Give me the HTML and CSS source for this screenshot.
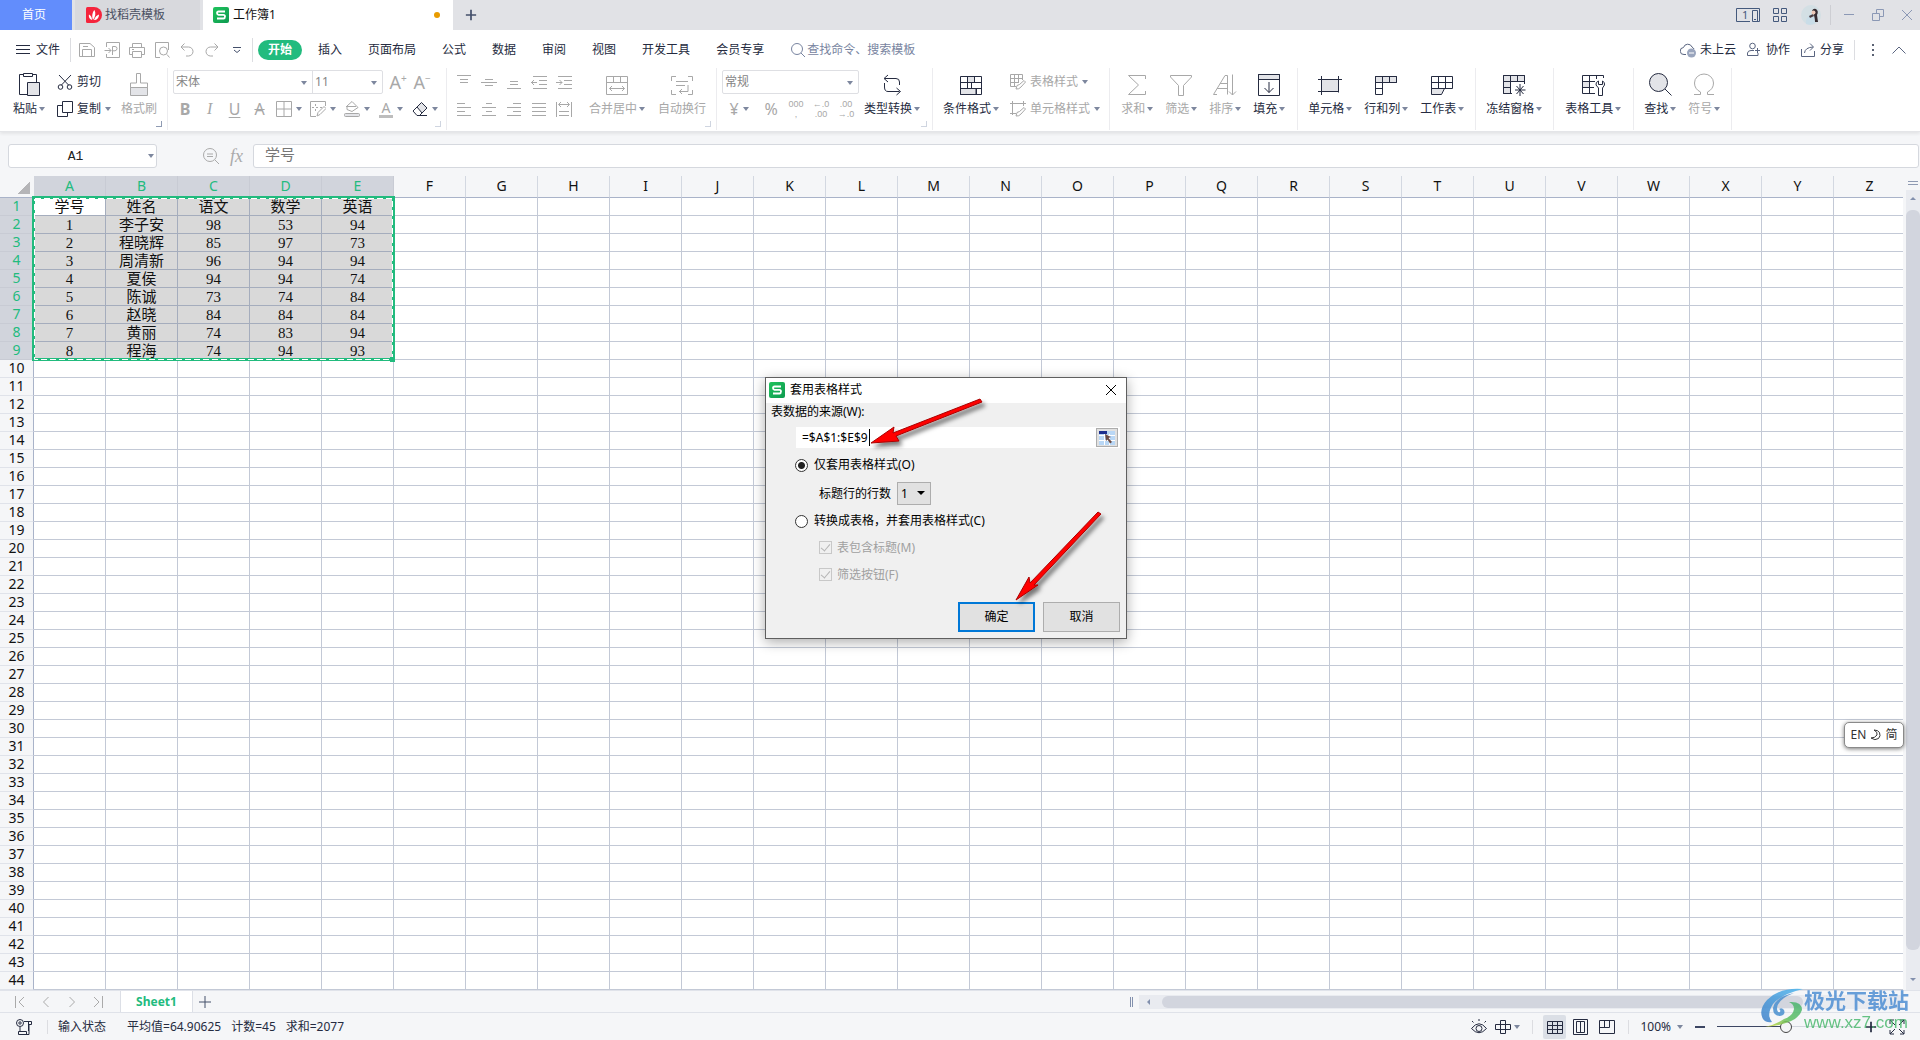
FILE: index.html
```html
<!DOCTYPE html>
<html lang="zh-CN">
<head>
<meta charset="utf-8">
<title>工作簿1</title>
<link rel="stylesheet" href="styles.css">
</head>
<body>
<svg class="sprite" aria-hidden="true">
  <defs>
    <linearGradient id="g-green" x1="0" y1="0" x2="1" y2="1"><stop offset="0" stop-color="#1fc35c"/><stop offset="1" stop-color="#0e9a50"/></linearGradient>
    <linearGradient id="g-blue" x1="0" y1="1" x2="1" y2="0"><stop offset="0" stop-color="#3f7fc8"/><stop offset="1" stop-color="#4db8f0"/></linearGradient>
    <linearGradient id="g-leaf" x1="0" y1="1" x2="1" y2="0"><stop offset="0" stop-color="#d9dc3c"/><stop offset=".5" stop-color="#5cbf62"/><stop offset="1" stop-color="#48b373"/></linearGradient>
    <filter id="f-shadow" x="-20%" y="-20%" width="150%" height="150%"><feDropShadow dx="3" dy="4" stdDeviation="2" flood-color="#000" flood-opacity=".5"/></filter>
  </defs>
  <symbol id="i-wps" viewBox="0 0 16 16"><rect width="16" height="16" rx="2" fill="url(#g-green)"/><path d="M12 4.500H5.500Q4 4.500 4 6T5.500 7.800H10.500Q12 7.800 12 9.600T10.500 11.500H4" fill="none" stroke="#fff" stroke-width="1.800"/></symbol>
  <symbol id="i-docer" viewBox="0 0 16 16"><path d="M0 1.500Q0 0 1.500 0H8A8 8 0 0 1 8 16H1.500Q0 16 0 14.500Z" fill="#f5243c"/><path d="M7 13C5.500 9 6.500 5 8.500 3C10 6 9.500 10 7 13ZM6 13C3 12 2.500 9 3 7.500C5 8.500 6 10.500 6 13ZM8 13C9 10 11 8 13 7.500C13 11 11 13 8 13Z" fill="#fff"/></symbol>
  <symbol id="i-plus" viewBox="0 0 14 14"><path d="M1 7H13M7 1V13"/></symbol>
  <symbol id="i-menu" viewBox="0 0 14 12"><path d="M0 1.500H14M0 5.500H14M0 9.500H14"/></symbol>
  <symbol id="i-save" viewBox="0 0 16 16"><path d="M.5 1.500H11L15.500 5.500V14.500H.5ZM3.500 14V7.500H12.500V14M4 4.500H9"/></symbol>
  <symbol id="i-pdf" viewBox="0 0 16 16"><path d="M2.500 5V.5H15.500V15.500H2.500V12M.5 8.500H7M4.500 6L7 8.500L4.500 11M8.500 13V4.500H11Q13 4.500 13 6.500T11 8.800H9"/></symbol>
  <symbol id="i-print" viewBox="0 0 16 16"><path d="M3.500 5V1.500H12.500V5M3.500 12.500H.5V5.500H15.500V12.500H12.500M3.500 9.500H12.500V15.500H3.500ZM3 7.500H5"/></symbol>
  <symbol id="i-preview" viewBox="0 0 16 16"><path d="M6 15.500H1.500V.5H14.500V8M13 12.500L15.500 15.500"/><circle cx="9.500" cy="9" r="4"/></symbol>
  <symbol id="i-undo" viewBox="0 0 16 16"><path d="M5.500 1.500L2 5L5.500 8.500M2 5H9.500A4.500 4.500 0 0 1 9.500 14H7"/></symbol>
  <symbol id="i-redo" viewBox="0 0 16 16"><path d="M10.500 1.500L14 5L10.500 8.500M14 5H6.500A4.500 4.500 0 0 0 6.500 14H9"/></symbol>
  <symbol id="i-more" viewBox="0 0 10 8"><path d="M1 1.500H9M2 4L5 6.500L8 4"/></symbol>
  <symbol id="i-search" viewBox="0 0 16 16"><circle cx="7" cy="7" r="5.500"/><path d="M11 11L15 15"/></symbol>
  <symbol id="i-cloud" viewBox="0 0 16 16"><path d="M6 12.500H4A3.500 3.500 0 0 1 3.500 5.500A4.500 4.500 0 0 1 12 5Q13.500 6 14 7"/><circle cx="11.500" cy="11" r="4.500" fill="#9aa5bd" stroke="none"/><path d="M9 11H14" stroke="#fff"/></symbol>
  <symbol id="i-collab" viewBox="0 0 16 16"><circle cx="6.500" cy="4" r="2.800"/><path d="M1.500 13.500V11Q2 8.500 5 8.500H8M1.500 13.500H12V11M9 8.500H14M11.500 6V11"/></symbol>
  <symbol id="i-share" viewBox="0 0 16 16"><path d="M1.500 7V14.500H14.500V9M4.500 11Q5 5.500 13 5M10 1.500L13.500 5L10 8.500"/></symbol>
  <symbol id="i-dots" viewBox="0 0 4 14"><path d="M1 1H3V3H1ZM1 6H3V8H1ZM1 11H3V13H1Z" fill="#5a6273" stroke="none"/></symbol>
  <symbol id="i-up" viewBox="0 0 14 8"><path d="M.5 7.500L7 1L13.500 7.500"/></symbol>
  <symbol id="i-screens" viewBox="0 0 26 16"><path d="M15 14.500H1.500V1.500H24.500V14.500H20M17.500 3.500H22.500V14.500H17.500ZM19 12.500H21"/></symbol>
  <symbol id="i-apps" viewBox="0 0 14 14"><path d="M.5.5H5.500V5.500H.5ZM8.500.5H13.500V5.500H8.500ZM.5 8.500H5.500V13.500H.5ZM8.500 8.500H13.500V13.500H8.500Z"/></symbol>
  <symbol id="i-min" viewBox="0 0 12 12"><path d="M1 5.500H11"/></symbol>
  <symbol id="i-restore" viewBox="0 0 12 12"><path d="M.5 4.500H7.500V11.500H.5ZM4.500 4V.5H11.500V7.500H8"/></symbol>
  <symbol id="i-close" viewBox="0 0 12 12"><path d="M1 1L11 11M11 1L1 11"/></symbol>
  <symbol id="i-paste" viewBox="0 0 24 24"><path d="M10 22.500H2.500V2.500H6.500M15.500 2.500H19.500V10M6.500 1.500H15.500V4.500H6.500Z"/><path d="M10.500 10.500H22.500V23.500H10.500Z" class="shade"/></symbol>
  <symbol id="i-cut" viewBox="0 0 16 16"><path d="M2 1L12 11.500M14 1L4 11.500"/><circle cx="3.500" cy="13" r="2.300"/><circle cx="12.500" cy="13" r="2.300"/></symbol>
  <symbol id="i-copy" viewBox="0 0 16 16"><path d="M5.500.5H15.500V11.500H5.500ZM5 4.500H.5V15.500H10.500V12"/></symbol>
  <symbol id="i-brush" viewBox="0 0 24 24"><path d="M9.500 11V1.500H13.500V11H20.500V16H3.500V11Z"/><path d="M3.500 15.500H20.500V23.500H3.500Z" class="shade"/></symbol>
  <symbol id="i-border" viewBox="0 0 16 16"><path d="M.5.5H15.500V15.500H.5ZM8 .5V15.500M.5 8H15.500"/></symbol>
  <symbol id="i-pattern" viewBox="0 0 16 16"><path d="M15.500 5V.5H.5V15.500H6M2 6.500H4M6 6.500H8M5.500 3V5M5.500 8V10M10 6.500H12M7 15L8 11.500L14 5.500L16 7.500L10 13.500Z"/></symbol>
  <symbol id="i-fill" viewBox="0 0 16 16"><path d="M3 5L8 .5L14 6.500L8 10.500L3 8.500ZM2 5.500H12"/><rect x=".5" y="12.500" width="15" height="3" class="shade" rx="1"/></symbol>
  <symbol id="i-eraser" viewBox="0 0 16 16"><path d="M5 6L9.500 1.500L15 7L10 12Z" class="shade"/><path d="M5 6L1 10L5 14.500H7.500L10 12M5 14.500H15"/></symbol>
  <symbol id="i-top" viewBox="0 0 16 16"><path d="M1 1.500H15M4 5.500H12M4 8.500H12"/></symbol>
  <symbol id="i-mid" viewBox="0 0 16 16"><path d="M4 5.500H12M0 8.500H16M4 11.500H12"/></symbol>
  <symbol id="i-bot" viewBox="0 0 16 16"><path d="M4 7.500H12M4 10.500H12M1 14.500H15"/></symbol>
  <symbol id="i-outdent" viewBox="0 0 16 16"><path d="M2 2.500H16M8 6.500H16M8 10.500H16M2 14.500H16M0 8.500H6M3 6L.5 8.500L3 11"/></symbol>
  <symbol id="i-indent" viewBox="0 0 16 16"><path d="M2 2.500H16M8 6.500H16M8 10.500H16M2 14.500H16M0 8.500H6M3.500 6L6 8.500L3.500 11"/></symbol>
  <symbol id="i-left" viewBox="0 0 16 16"><path d="M1 2.500H9M1 6.500H15M1 10.500H9M1 14.500H15"/></symbol>
  <symbol id="i-center" viewBox="0 0 16 16"><path d="M5 2.500H11M1 6.500H15M5 10.500H11M1 14.500H15"/></symbol>
  <symbol id="i-right" viewBox="0 0 16 16"><path d="M7 2.500H15M1 6.500H15M7 10.500H15M1 14.500H15"/></symbol>
  <symbol id="i-justify" viewBox="0 0 16 16"><path d="M1 2.500H15M1 6.500H15M1 10.500H15M1 14.500H15"/></symbol>
  <symbol id="i-spread" viewBox="0 0 16 16"><path d="M.5 1V16M15.500 1V16M3 3.500H13M5 1L2.500 3.500L5 6M11 1L13.500 3.500L11 6M3 10.500H13M3 14.500H13"/></symbol>
  <symbol id="i-merge" viewBox="0 0 24 24"><path d="M1.500 4.500H22.500V22.500H1.500ZM1.500 10.500H22.500M8.500 4.500V10.500M15.500 4.500V10.500M4.500 16.500H19.500M7 14L4.500 16.500L7 19M17 14L19.500 16.500L17 19"/></symbol>
  <symbol id="i-wrap" viewBox="0 0 24 24"><path d="M6 4.500H1.500V9M18 4.500H22.500V9M1.500 18V22.500H6M22.500 18V22.500H18M6 9.500H18M6 13.500H15M18 13V19.500H9M12 17L9.500 19.500L12 22"/></symbol>
  <symbol id="i-convert" viewBox="0 0 24 24"><path d="M4.500 6.500H16Q19.500 6.500 19.500 10V13M8 3L4 6.500L8 10M4.500 11V15Q4.500 19.500 8 19.500H19.500M16.500 16L20.500 19.500L16.500 23"/></symbol>
  <symbol id="i-cond" viewBox="0 0 24 24"><path d="M8.500 4.500H15.500V10.500H8.500ZM1.500 16.500H17V22.500H1.500Z" class="shade"/><path d="M1.500 4.500H22.500V22.500H1.500ZM1.500 10.500H22.500M1.500 16.500H22.500M8.500 4.500V16.500M15.500 4.500V10.500M12.500 10.500V16.500M17.500 16.500V22.500"/></symbol>
  <symbol id="i-tstyle" viewBox="0 0 16 16"><path d="M6 12.500H.5V.5H12.500V6M.5 4.500H12M.5 8.500H9M4.500.5V12M8.500.5V9M6 15L7 11.500L9.500 10.500L14 6.500L15.500 8L11 13Q9 15.500 6 15Z"/></symbol>
  <symbol id="i-cstyle" viewBox="0 0 16 16"><path d="M0 2.500H16M2.500 0V14M13.500 0V5M0 12.500H6M6 15L7 11.500L9.500 10.500L14 6.500L15.500 8L11 13Q9 15.500 6 15Z"/></symbol>
  <symbol id="i-sum" viewBox="0 0 24 24"><path d="M20.500 7V3.500H3.500L13.500 13L3.500 22.500H20.500V19"/></symbol>
  <symbol id="i-filter" viewBox="0 0 24 24"><path d="M1.500 3.500H22.500V5L14.500 13.500V23.500H9.500V13.500L1.500 5Z"/></symbol>
  <symbol id="i-sort" viewBox="0 0 24 24"><path d="M.5 22.500L12 3.500H14.500V22.500M4 16.500H14M7 11.500H14M.5 22.500H4M19.500 2.500V23M16 19.500L19.500 23L23 19.500"/></symbol>
  <symbol id="i-down" viewBox="0 0 24 24"><path d="M1.500 2.500H22.500V7.500H1.500Z" class="shade"/><path d="M1.500 2.500H22.500V23.500H1.500ZM12 10V20.500M7.500 16L12 20.500L16.500 16"/></symbol>
  <symbol id="i-cell" viewBox="0 0 24 24"><path d="M3.500 7.500H20.500V19.500H3.500Z" class="shade"/><path d="M0 7.500H24M0 19.500H18M3.500 4V23M20.500 4V17M20.500 18.500V20.500" /></symbol>
  <symbol id="i-rowcol" viewBox="0 0 24 24"><path d="M1.500 4.500H22.500V10.500H1.500Z" class="shade"/><path d="M1.500 4.500H22.500V10.500H8.500V22.500H1.500ZM8.500 4.500V10.500H1.500M15.500 4.500V10.500M1.500 16.500H8.500"/></symbol>
  <symbol id="i-sheet" viewBox="0 0 24 24"><path d="M1.500 16.500H14.500L11.500 22.500H1.500Z" class="shade"/><path d="M1.500 4.500H22.500V16.500H1.500ZM1.500 10.500H22.500M8.500 4.500V16.500M15.500 4.500V16.500"/></symbol>
  <symbol id="i-freeze" viewBox="0 0 24 24"><path d="M1.500 3.500H22.500V9.500H8.500V21.500H1.500Z" class="shade"/><path d="M22.500 12V3.500H1.500V21.500H10M1.500 9.500H22.500M8.500 3.500V21.500M15.500 3.500V9.500M1.500 15.500H8.500M18 12V24M13 18H23.500M14.500 14L21.500 22M21.500 14L14.500 22"/></symbol>
  <symbol id="i-tools" viewBox="0 0 24 24"><path d="M1.500 9.500H8.500V15.500H1.500Z" class="shade"/><path d="M22.500 6V3.500H1.500V21.500H14M1.500 9.500H14M1.500 15.500H13M8.500 3.500V21.500M15.500 3.500V7M17.500 9Q14.500 10 15 13L17.500 16V23.500H21.500V16L23.500 13Q24 10 21.500 9V12.500H17.500Z"/></symbol>
  <symbol id="i-find" viewBox="0 0 24 24"><circle cx="10.500" cy="10.500" r="9" class="shade"/><path d="M17 17L23.500 23.500"/></symbol>
  <symbol id="i-omega" viewBox="0 0 24 24"><path d="M2 22.500H8.500V20Q2.500 17 2.500 11A9.500 9 0 0 1 21.500 11Q21.500 17 15.500 20V22.500H22"/></symbol>
  <symbol id="i-zoomout" viewBox="0 0 18 18"><circle cx="8" cy="8" r="6.500"/><path d="M13 13L17 17M5 7H11M5 9.500H11"/></symbol>
  <symbol id="i-first" viewBox="0 0 12 12"><path d="M1.500 0V12M10 1L5 6L10 11"/></symbol>
  <symbol id="i-prev" viewBox="0 0 12 12"><path d="M8.500 1L3.500 6L8.500 11"/></symbol>
  <symbol id="i-next" viewBox="0 0 12 12"><path d="M3.500 1L8.500 6L3.500 11"/></symbol>
  <symbol id="i-last" viewBox="0 0 12 12"><path d="M10.500 0V12M2 1L7 6L2 11"/></symbol>
  <symbol id="i-macro" viewBox="0 0 16 16"><circle cx="4" cy="4" r="3.500"/><circle cx="4" cy="4" r="1.200"/><path d="M8 2.500H15.500V5.500H13V15.500H2.500V12.500H10.500V15M12.500 3V12M4 8V12"/></symbol>
  <symbol id="i-eye" viewBox="0 0 16 16"><path d="M.5 9.500Q8 0 15.500 9.500Q8 18 .5 9.500ZM8 0V2M1 2L2.500 3.500M15 2L13.500 3.500"/><circle cx="8" cy="9.500" r="3"/></symbol>
  <symbol id="i-cross" viewBox="0 0 16 16"><path d="M5.500 1.500H10.500V14.500H5.500ZM.5 5.500H15.500V10.500H.5Z"/></symbol>
  <symbol id="i-normal" viewBox="0 0 16 16"><path d="M.5 2.500H15.500V14.500H.5ZM.5 6.500H15.500M.5 10.500H15.500M5.500 2.500V14.500M10.500 2.500V14.500"/></symbol>
  <symbol id="i-page" viewBox="0 0 16 16"><path d="M.5.5H14.500V15.500H.5ZM3.500 2.500H11.500V13.500H3.500ZM7.500 3V13"/></symbol>
  <symbol id="i-break" viewBox="0 0 16 16"><path d="M.5 1.500H15.500V14.500H.5ZM.5 8.500H10.500V1.500M5.500 1.500V8.500"/></symbol>
  <symbol id="i-full" viewBox="0 0 16 16"><path d="M6 6L1 1M1 5V1H5M10 6L15 1M11 1H15V5M6 10L1 15M1 11V15H5M10 10L15 15M15 11V15H11"/></symbol>
  <symbol id="i-pick" viewBox="0 0 16 14"><rect width="16" height="14" fill="#b9d7f5"/><path d="M0 4.500H16M0 9.500H16M5.500 3V14M10.500 3V14" stroke="#fff"/><rect width="8" height="3" fill="#1c2f8f"/><path d="M6 3L12 6L9.500 7L13 11L11 12.500L8.500 8.500L7 10Z" fill="#6b4b45"/></symbol>
</svg>

<div class="app">
  <header class="titlebar">
    <button class="tab home">首页</button>
    <button class="tab docer"><svg class="s16"><use href="#i-docer"/></svg>找稻壳模板</button>
    <button class="tab book"><svg class="s16"><use href="#i-wps"/></svg>工作簿1<span class="unsaved"></span></button>
    <button class="newtab" aria-label="新建"><svg class="ico bold" width="14" height="14"><use href="#i-plus"/></svg></button>
    <div class="winctl">
      <button class="screens" aria-label="窗口"><svg class="ico" width="26" height="16"><use href="#i-screens"/></svg><span>1</span></button>
      <button aria-label="应用"><svg class="ico" width="14" height="14"><use href="#i-apps"/></svg></button>
      <button class="avatar" aria-label="账户"><svg width="20" height="20" viewBox="0 0 20 20"><circle cx="10" cy="10" r="10" fill="#d3dfe4"/><path d="M11 6Q12 3 15 4Q18 6 16 10L17 17L14 17L13 10Z" fill="#352b30"/><path d="M5 19Q4 13 10 9L13 11L14 18Q10 21 5 19Z" fill="#c9dde8"/><path d="M8 11L12 9L13 11L9 13Z" fill="#4a3c40"/><circle cx="12.500" cy="7.500" r="2" fill="#edc9b8"/></svg></button>
      <i class="vsep"></i>
      <button class="w" aria-label="最小化"><svg class="ico" width="12" height="12"><use href="#i-min"/></svg></button>
      <button class="w" aria-label="还原"><svg class="ico" width="12" height="12"><use href="#i-restore"/></svg></button>
      <button class="w" aria-label="关闭"><svg class="ico" width="12" height="12"><use href="#i-close"/></svg></button>
    </div>
  </header>

  <nav class="menubar">
    <button class="file"><svg class="ico" width="14" height="12"><use href="#i-menu"/></svg>文件</button>
    <i class="vsep"></i>
    <div class="quick">
      <button aria-label="保存"><svg class="ico s16"><use href="#i-save"/></svg></button>
      <button aria-label="输出为PDF"><svg class="ico s16"><use href="#i-pdf"/></svg></button>
      <button aria-label="打印"><svg class="ico s16"><use href="#i-print"/></svg></button>
      <button aria-label="打印预览"><svg class="ico s16"><use href="#i-preview"/></svg></button>
      <button aria-label="撤销"><svg class="ico s16"><use href="#i-undo"/></svg></button>
      <button aria-label="恢复"><svg class="ico s16"><use href="#i-redo"/></svg></button>
      <button class="dark" aria-label="更多"><svg class="ico" width="10" height="8"><use href="#i-more"/></svg></button>
    </div>
    <i class="vsep"></i>
    <div class="menus">
      <button class="active">开始</button><button>插入</button><button>页面布局</button><button>公式</button><button>数据</button><button>审阅</button><button>视图</button><button>开发工具</button><button>会员专享</button>
    </div>
    <button class="search"><svg class="ico s16"><use href="#i-search"/></svg>查找命令、搜索模板</button>
    <div class="account">
      <button><svg class="ico s16"><use href="#i-cloud"/></svg>未上云</button>
      <button><svg class="ico s16"><use href="#i-collab"/></svg>协作</button>
      <button><svg class="ico s16"><use href="#i-share"/></svg>分享</button>
      <i class="vsep"></i>
      <button class="dots" aria-label="菜单"><svg width="4" height="14"><use href="#i-dots"/></svg></button>
      <button aria-label="折叠"><svg class="ico" width="14" height="8"><use href="#i-up"/></svg></button>
    </div>
  </nav>

  <section class="ribbon">
    <div class="group g-clip launch">
      <button class="big"><svg class="ico s24"><use href="#i-paste"/></svg><span>粘贴<i class="caret"></i></span></button>
      <div class="rows">
        <button class="small"><svg class="ico s16"><use href="#i-cut"/></svg>剪切</button>
        <button class="small"><svg class="ico s16"><use href="#i-copy"/></svg>复制<i class="caret"></i></button>
      </div>
      <button class="big off"><svg class="ico s24"><use href="#i-brush"/></svg><span>格式刷</span></button>
    </div>
    <div class="group g-font launch dim">
      <div class="rows">
        <div class="line">
          <div class="combo"><span class="pick font"><select aria-label="字体"><option>宋体</option></select></span><span class="pick size"><select aria-label="字号"><option>11</option></select></span></div>
          <button class="glyph">A<sup>+</sup></button><button class="glyph">A<sup>−</sup></button>
        </div>
        <div class="line off fmt">
          <button class="cellbtn b">B</button><button class="cellbtn i">I</button><button class="cellbtn u">U</button><button class="cellbtn s">A</button>
          <button class="menuicon" aria-label="边框"><svg class="ico s16"><use href="#i-border"/></svg><i class="caret"></i></button>
          <button class="menuicon" aria-label="图案"><svg class="ico s16"><use href="#i-pattern"/></svg><i class="caret"></i></button>
          <button class="menuicon" aria-label="填充色"><svg class="ico s16"><use href="#i-fill"/></svg><i class="caret"></i></button>
          <button class="menuicon" aria-label="字体颜色"><span class="fc">A</span><i class="caret"></i></button>
          <button class="menuicon on" aria-label="清除"><svg class="ico s16"><use href="#i-eraser"/></svg><i class="caret"></i></button>
        </div>
      </div>
    </div>
    <div class="group g-align launch dim off">
      <div class="rows icons">
        <div class="line"><svg class="ico s16"><use href="#i-top"/></svg><svg class="ico s16"><use href="#i-mid"/></svg><svg class="ico s16"><use href="#i-bot"/></svg><svg class="ico s16"><use href="#i-outdent"/></svg><svg class="ico s16"><use href="#i-indent"/></svg></div>
        <div class="line"><svg class="ico s16"><use href="#i-left"/></svg><svg class="ico s16"><use href="#i-center"/></svg><svg class="ico s16"><use href="#i-right"/></svg><svg class="ico s16"><use href="#i-justify"/></svg><svg class="ico s16"><use href="#i-spread"/></svg></div>
      </div>
      <button class="big off"><svg class="ico s24"><use href="#i-merge"/></svg><span>合并居中<i class="caret"></i></span></button>
      <button class="big off"><svg class="ico s24"><use href="#i-wrap"/></svg><span>自动换行</span></button>
    </div>
    <div class="group g-num launch dim">
      <div class="rows">
        <div class="line"><span class="pick fmtsel"><select aria-label="数字格式"><option>常规</option></select></span></div>
        <div class="line off nums">
          <button class="menuicon"><span class="yen">¥</span><i class="caret"></i></button>
          <button class="yen">%</button>
          <button class="dec"><span>000</span><span>,</span></button>
          <button class="dec"><span>←.0</span><span>.00</span></button>
          <button class="dec"><span>.00</span><span>→.0</span></button>
        </div>
      </div>
      <button class="big"><svg class="ico s24"><use href="#i-convert"/></svg><span>类型转换<i class="caret"></i></span></button>
    </div>
    <div class="group g-style">
      <button class="big"><svg class="ico s24"><use href="#i-cond"/></svg><span>条件格式<i class="caret"></i></span></button>
      <div class="rows">
        <button class="small off"><svg class="ico s16"><use href="#i-tstyle"/></svg>表格样式<i class="caret"></i></button>
        <button class="small off"><svg class="ico s16"><use href="#i-cstyle"/></svg>单元格样式<i class="caret"></i></button>
      </div>
    </div>
    <div class="group">
      <button class="big off"><svg class="ico s24"><use href="#i-sum"/></svg><span>求和<i class="caret"></i></span></button>
      <button class="big off"><svg class="ico s24"><use href="#i-filter"/></svg><span>筛选<i class="caret"></i></span></button>
      <button class="big off"><svg class="ico s24"><use href="#i-sort"/></svg><span>排序<i class="caret"></i></span></button>
      <button class="big"><svg class="ico s24"><use href="#i-down"/></svg><span>填充<i class="caret"></i></span></button>
    </div>
    <div class="group tight">
      <button class="big"><svg class="ico s24"><use href="#i-cell"/></svg><span>单元格<i class="caret"></i></span></button>
      <button class="big"><svg class="ico s24"><use href="#i-rowcol"/></svg><span>行和列<i class="caret"></i></span></button>
      <button class="big"><svg class="ico s24"><use href="#i-sheet"/></svg><span>工作表<i class="caret"></i></span></button>
    </div>
    <div class="group tight"><button class="big"><svg class="ico s24"><use href="#i-freeze"/></svg><span>冻结窗格<i class="caret"></i></span></button></div>
    <div class="group"><button class="big"><svg class="ico s24"><use href="#i-tools"/></svg><span>表格工具<i class="caret"></i></span></button></div>
    <div class="group tight">
      <button class="big"><svg class="ico s24"><use href="#i-find"/></svg><span>查找<i class="caret"></i></span></button>
      <button class="big off"><svg class="ico s24"><use href="#i-omega"/></svg><span>符号<i class="caret"></i></span></button>
    </div>
  </section>

  <section class="formula">
    <div class="namebox"><input aria-label="名称框" value="A1"><i class="caret"></i></div>
    <div class="fx"><svg class="ico" width="18" height="18"><use href="#i-zoomout"/></svg><span>fx</span></div>
    <input class="fbar" aria-label="编辑栏" value="学号">
  </section>

  <main class="work">
    <div class="sheet">
      <table class="grid" id="grid"></table>
      <svg class="ants" width="365" height="167" aria-hidden="true"><path d="M2 1.500H361.500V163.500H1.500V0" class="solid"/><path d="M3 2.500H360.500V163.500H2.500V3" class="dash"/><rect x="358" y="161" width="5" height="5" fill="#22bb7e"/></svg>
    </div>
    <div class="vscroll"><div class="split"></div><i class="tri up"></i><div class="thumb"></div><i class="tri down"></i></div>
  </main>

  <div class="tabs">
    <div class="nav">
      <button aria-label="第一张"><svg class="ico" width="12" height="12"><use href="#i-first"/></svg></button>
      <button aria-label="上一张"><svg class="ico" width="12" height="12"><use href="#i-prev"/></svg></button>
      <button aria-label="下一张"><svg class="ico" width="12" height="12"><use href="#i-next"/></svg></button>
      <button aria-label="最后一张"><svg class="ico" width="12" height="12"><use href="#i-last"/></svg></button>
    </div>
    <button class="sheettab">Sheet1</button>
    <button class="addsheet" aria-label="新建工作表"><svg class="ico" width="14" height="14"><use href="#i-plus"/></svg></button>
    <div class="hwrap"><i class="handle"></i><div class="hscroll"><i class="tri left"></i><div class="thumb"></div></div></div>
  </div>

  <footer class="status">
    <svg class="ico s16 macro"><use href="#i-macro"/></svg><i class="vsep"></i>
    <span class="state">输入状态</span>
    <span>平均值=64.90625</span><span>计数=45</span><span>求和=2077</span>
    <div class="views">
      <button aria-label="护眼模式"><svg class="ico s16"><use href="#i-eye"/></svg></button>
      <button class="menuicon" aria-label="阅读模式"><svg class="ico s16"><use href="#i-cross"/></svg><i class="caret"></i></button>
      <i class="vsep"></i>
      <button class="view sel" aria-label="普通视图"><svg class="ico s16"><use href="#i-normal"/></svg></button>
      <button class="view" aria-label="页面布局"><svg class="ico s16"><use href="#i-page"/></svg></button>
      <button class="view last" aria-label="分页预览"><svg class="ico s16"><use href="#i-break"/></svg></button>
      <i class="vsep"></i>
      <button class="pct">100%<i class="caret"></i></button>
      <button class="minus" aria-label="缩小"></button>
      <input type="range" aria-label="缩放" min="0" max="100" value="50">
      <button class="plus" aria-label="放大"><svg class="ico bold" width="12" height="12" viewBox="0 0 14 14"><use href="#i-plus"/></svg></button>
      <button aria-label="全屏"><svg class="ico s16"><use href="#i-full"/></svg></button>
    </div>
  </footer>
</div>

<form class="dialog" role="dialog" aria-labelledby="dlg-title">
  <div class="dtitle"><svg class="s16"><use href="#i-wps"/></svg><span id="dlg-title">套用表格样式</span><button type="button" aria-label="关闭"><svg class="ico" width="12" height="12"><use href="#i-close"/></svg></button></div>
  <div class="dbody">
    <label class="src" for="range">表数据的来源(W):</label>
    <div class="field"><input id="range" value="=$A$1:$E$9"><i class="ibeam"></i><button type="button" aria-label="选择区域"><svg width="16" height="14"><use href="#i-pick"/></svg></button></div>
    <label class="opt first"><input type="radio" name="mode" checked>仅套用表格样式(O)</label>
    <div class="rowsel"><label for="hrows">标题行的行数</label><select id="hrows"><option>1</option></select></div>
    <label class="opt"><input type="radio" name="mode">转换成表格，并套用表格样式(C)</label>
    <label class="opt sub"><input type="checkbox" checked disabled>表包含标题(M)</label>
    <label class="opt sub"><input type="checkbox" checked disabled>筛选按钮(F)</label>
    <div class="actions"><button type="button" class="ok">确定</button><button type="button">取消</button></div>
  </div>
  <svg class="pointers" width="360" height="240" viewBox="765 377 360 240" aria-hidden="true"><g filter="url(#f-shadow)" fill="#f00" stroke="#a80000" stroke-width="1"><path d="M871 443L894 427L893 433L980 399L982 402L896 436L899 441Z"/><path d="M1016 600L1029 577L1030 583L1098 512L1101 514L1034 585L1038 585Z"/></g></svg>
</form>

<div class="ime">EN<svg width="11" height="12" viewBox="0 0 11 12"><path d="M4 1Q8 3 7 6Q5 9 1 9Q5 12 8.500 9.500Q11 7 9.500 3.500Q8 1 4 1Z" fill="none" stroke="#333"/></svg>简</div>

<div class="mark">
  <svg width="44" height="40" viewBox="0 0 44 40"><path d="M43 1Q20 -1 7 12Q-2 22 3 31Q6 35 12 34Q6 27 13 16Q22 6 43 1Z" fill="url(#g-blue)"/><path d="M34 5Q15 9 13 20Q13 28 20 28Q26 27 24 22Q22 19 19 21Q21 22 20 24Q17 25 17 20Q18 11 34 5Z" fill="#4a90d0"/><path d="M29 14Q42 13 42 22Q38 36 5 39Q17 36 24 31Q33 28 34 21Q34 16 29 14Z" fill="url(#g-leaf)"/></svg>
  <div><strong>极光下载站</strong><span>www.xz7.com</span></div>
</div>
<script src="script.js"></script>
</body>
</html>
```
FILE: styles.css
```css
:root {
  --ink: #252b40;
  --off: #a8a8a8;
  --green: #22bb7e;
  --pane: #f5f6f8;
  --line: #c3c9d6;
  --ui: "Noto Sans", "Noto Sans CJK SC", sans-serif;
}
* { box-sizing: border-box; }
body { margin: 0; font: 12px/16px var(--ui); color: var(--ink); overflow: hidden; }
button, input, select { font: inherit; color: inherit; border: 0; background: none; padding: 0; margin: 0; border-radius: 0; outline: 0; }
button { display: inline-flex; align-items: center; justify-content: center; white-space: nowrap; }
select { appearance: none; }
svg { display: block; flex: none; }
.sprite { position: absolute; width: 0; height: 0; }
.ico { fill: none; stroke: currentColor; stroke-width: 1; }
.ico.bold { stroke-width: 2; }
.shade { fill: #e3e4e8; }
.s16 { width: 16px; height: 16px; }
.s24 { width: 24px; height: 24px; }
.caret { display: inline-block; flex: none; border: 3px solid transparent; border-top: 4px solid #7d879e; border-bottom: 0; }
.vsep { width: 1px; height: 24px; background: #dcdde1; flex: none; }
.off { color: var(--off); }
.off .shade { fill: #f3f3f3; }
.on { color: var(--ink); }
.on .shade { fill: #dfe1e6; }

.app { display: flex; flex-direction: column; height: 100vh; background: #fff; }

.titlebar { display: flex; height: 30px; flex: none; background: #e1e2e6; }
.tab { gap: 6px; height: 30px; }
.home { width: 72px; background: #628dfc; color: #fff; margin-right: 3px; padding-right: 4px; }
.docer { width: 125px; background: #d8d9dd; color: #4a5062; justify-content: flex-start; padding-left: 11px; margin-right: 3px; gap: 3px; }
.book { width: 250px; background: #fff; color: #111; justify-content: flex-start; padding: 0 13px 0 10px; gap: 4px; }
.unsaved { width: 6px; height: 6px; border-radius: 50%; background: #e89b00; margin-left: auto; }
.newtab { width: 36px; color: #44506b; }
.newtab svg { width: 12px; }
.winctl { margin-left: auto; display: flex; align-items: center; padding-right: 7px; color: #44597c; }
.winctl > * + * { margin-left: 12px; }
.winctl .avatar { margin-left: 14px; }
.winctl .vsep { height: 20px; background: #cdced3; margin-left: 9px; }
.winctl .w { color: #8b98b5; margin-left: 17px; }
.winctl .vsep + .w { margin-left: 12px; }
.screens { position: relative; }
.screens span { position: absolute; left: 7px; top: 0; font-size: 11px; }

.menubar { display: flex; align-items: center; height: 36px; flex: none; padding: 3px 14px 0 16px; }
.file { gap: 6px; margin-right: 10px; }
.quick { display: flex; gap: 9px; margin: 0 6px 0 8px; color: var(--off); }
.quick .dark { width: 16px; color: #44506b; margin-right: 1px; }
.menus { display: flex; gap: 26px; margin-left: 5px; }
.menus .active { background: var(--green); color: #fff; font-weight: 700; border-radius: 10px; height: 20px; width: 44px; margin-right: -10px; }
.search { color: #7884a0; margin-left: 26px; gap: 1px; }
.account { display: flex; align-items: center; margin-left: auto; }
.account button { gap: 4px; margin-right: 10px; }
.account .ico { color: #5a6580; }
.account .vsep { height: 20px; margin-right: 16px; }
.account .dots { margin-right: 17px; }
.account button:last-child { margin-right: 0; }

.ribbon { display: flex; height: 66px; flex: none; padding-top: 2px; border-bottom: 1px solid #e4e5e8; box-shadow: 0 2px 3px #00000012; position: relative; color: var(--ink); }
.group { position: relative; display: flex; gap: 12px; height: 62px; padding: 2px 12px 0 11px; border-right: 1px solid #ececef; }
.group.tight { padding-left: 10px; padding-right: 11px; }
.launch::after { content: ""; position: absolute; right: 5px; bottom: 3px; width: 5px; height: 5px; border: solid #8f9bb3; border-width: 0 1px 1px 0; }
.launch.dim::after { border-color: #cfd5e0; }
.big { flex-direction: column; justify-content: flex-start; align-items: center; height: 50px; padding-top: 2px; gap: 5px; }
.big span { display: flex; align-items: center; gap: 2px; }
.rows { display: flex; flex-direction: column; gap: 3px; }
.line { display: flex; align-items: center; height: 24px; }
.small { height: 24px; justify-content: flex-start; gap: 4px; }
.g-clip { padding-left: 13px; padding-right: 10px; gap: 12px; }
.g-clip .big.off { margin-left: -2px; }
.g-font { padding: 2px 4px 0 5px; }
.pick { position: relative; display: flex; height: 24px; color: #858585; }
.pick select { width: 100%; padding: 0 8px 0 2px; }
.pick::after { content: ""; position: absolute; right: 5px; top: 10px; border: 3px solid transparent; border-top: 4px solid #7d879e; border-bottom: 0; }
.combo { display: flex; border: 1px solid #dedfe3; border-radius: 2px; height: 24px; margin-right: 7px; }
.combo .pick { height: 22px; }
.font { width: 138px; }
.size { width: 70px; border-left: 1px solid #dedfe3; }
.glyph { width: 16px; margin-right: 8px; font-size: 18px; color: var(--off); align-items: flex-start; }
.glyph sup { font-size: 10px; line-height: 8px; }
.fmt .cellbtn { width: 25px; font-size: 16px; line-height: 20px; }
.fmt .cellbtn.b { width: 24px; font-weight: 700; }
.cellbtn.i { font-family: "Liberation Serif", serif; font-style: italic; }
.cellbtn.u { text-decoration: underline; text-underline-offset: 2px; }
.cellbtn.s { text-decoration: line-through; }
.menuicon { gap: 4px; width: 34px; height: 24px; }
.fc { width: 14px; font-size: 14px; line-height: 14px; border-bottom: 3px solid #bdbdbd; }
.g-align { padding-left: 9px; padding-right: 10px; gap: 17px; }
.g-align .big + .big { margin-left: -4px; }
.icons .line { gap: 9px; }
.g-num { padding-left: 5px; padding-right: 12px; gap: 5px; }
.fmtsel { width: 137px; border: 1px solid #dedfe3; border-radius: 2px; }
.nums { gap: 5px; }
.nums > button:not(.menuicon) { width: 20px; }
.yen { font-size: 16px; }
.dec { flex-direction: column; font: 9px/10px "Liberation Sans", sans-serif; }
.g-style { padding-left: 10px; padding-right: 9px; gap: 11px; }

.formula { display: flex; height: 44px; flex: none; padding: 12px 1px 8px 8px; background: var(--pane); }
.namebox { display: flex; align-items: center; width: 149px; background: #fff; border: 1px solid #d5d8de; border-radius: 3px; padding-right: 2px; }
.namebox input { flex: 1; min-width: 0; text-align: center; padding: 2px 6px 0 0; font: 13px/16px "Liberation Mono", monospace; color: #222; }
.fx { display: flex; align-items: center; width: 96px; padding-left: 45px; gap: 10px; color: #aaa; }
.fx span { font: italic 18px/20px "Liberation Serif", serif; }
.fbar { flex: 1; background: #fff; border: 1px solid #d5d8de; border-radius: 3px; padding: 0 12px 4px 11px; font-size: 15px; color: #777; }

.work { display: flex; flex: 1; min-height: 0; background: var(--pane); }
.sheet { position: relative; flex: 1; min-width: 0; overflow: hidden; background: #fff; }
.grid { table-layout: fixed; border-collapse: separate; border-spacing: 0; width: 1906px; color: #111; }
.grid .rh { width: 34px; }
.grid th, .grid td { padding: 0; text-align: center; font-weight: 400; white-space: nowrap; }
.grid th { background: var(--pane); font-size: 14px; }
.grid thead th { height: 22px; line-height: 20px; border-bottom: 1px solid #a9b3c9; border-right: 1px solid #d3d8e1; vertical-align: top; }
.grid thead th:first-child { border-right: 0; }
.grid tbody th { height: 18px; line-height: 16px; border-right: 1px solid #a9b3c9; border-bottom: 1px solid #e0e3ea; vertical-align: top; }
.grid tbody td { height: 18px; padding-top: 1px; border-right: 1px solid var(--line); border-bottom: 1px solid var(--line); font: 15px/16px "Liberation Serif", "Noto Sans CJK SC", serif; }
.grid th.hot { background: #d1d4dc; color: var(--green); border-right-color: #c8cbd4; border-bottom-color: #c8cbd4; }
.grid td.hot { background: #d9d9d9; border-color: #a5adbd; }
.grid td.cur { background: #fff; }
.corner { width: 12px; height: 12px; margin: 6px 4px 0 auto; background: linear-gradient(135deg, transparent 50%, #b5b5b8 50%); }
.ants { position: absolute; left: 32px; top: 20px; }
.ants path { fill: none; }
.solid { stroke: var(--green); stroke-width: 3; }
.dash { stroke: #fff; stroke-width: 1; stroke-dasharray: 6 3; }
.vscroll { display: flex; flex-direction: column; align-items: center; width: 17px; flex: none; background: #e9ebf0; border-left: 3px solid var(--pane); padding-bottom: 6px; }
.split { align-self: stretch; height: 14px; background: linear-gradient(#8f9bb3, #8f9bb3) 2px 5px / 10px 1px no-repeat, linear-gradient(#8f9bb3, #8f9bb3) 2px 8px / 10px 1px no-repeat, var(--pane); }
.tri { border: 3px solid transparent; flex: none; }
.tri.up { border-bottom-color: #8290ad; margin: 4px 0 10px; }
.tri.down { border-top-color: #8290ad; margin-top: 28px; }
.tri.left { border-right-color: #8290ad; margin: 0 12px 0 2px; }
.vscroll .thumb { flex: 1; align-self: stretch; background: #d2d5de; border-radius: 6px; }

.tabs { display: flex; align-items: center; height: 23px; flex: none; background: var(--pane); border-top: 1px solid #e0e3ea; border-bottom: 1px solid #dfe2e9; padding-right: 17px; }
.nav { display: flex; gap: 14px; width: 120px; padding-left: 14px; color: #aaa; }
.sheettab { width: 73px; align-self: stretch; background: #fff; border: solid #dcdfe6; border-width: 0 1px; color: var(--green); font-weight: 700; }
.addsheet { margin-left: 5px; color: #44506b; }
.hwrap { display: flex; align-items: center; gap: 6px; margin-left: auto; width: 41%; max-width: 773px; }
.handle { width: 3px; height: 10px; border: solid #8290ad; border-width: 0 1px; }
.hscroll { display: flex; align-items: center; flex: 1; height: 14px; background: #e9ebf0; padding: 0 100px 0 3px; }
.hscroll .thumb { flex: 1; height: 12px; border-radius: 6px; background: #d2d5de; }

.status { display: flex; align-items: center; height: 27px; flex: none; background: var(--pane); padding-right: 15px; gap: 10px; }
.status .vsep { height: 14px; }
.macro { margin: 0 5px 0 16px; }
.state { margin-right: 11px; }
.views { display: flex; align-items: center; margin-left: auto; }
.views .menuicon { width: 28px; gap: 3px; margin: 0 11px 0 6px; }
.view { width: 23px; height: 24px; margin-right: 3px; border-radius: 2px; }
.view.last { margin-right: 10px; }
.view.sel { background: #dbdfe6; }
.views .vsep + .view { margin-left: 10px; }
.pct { margin: 0 12px 0 11px; gap: 6px; }
.minus { width: 10px; height: 2px; background: #3c4663; }
.views input { appearance: none; width: 138px; height: 14px; margin: 0 10px 0 12px; background: linear-gradient(90deg, #3c4663 50%, #d3d6de 50%) 0 6px / 100% 1px no-repeat; }
.views input::-webkit-slider-thumb { appearance: none; width: 12px; height: 12px; border: 1px solid #444; border-radius: 50%; background: var(--pane); }
.plus { margin-right: 12px; }

.dialog { position: absolute; left: 765px; top: 377px; width: 362px; background: #f0f0f0; border: 1px solid #5f5f5f; box-shadow: 0 3px 12px #00000055; color: #000; }
.dtitle { display: flex; align-items: center; gap: 5px; height: 25px; padding: 0 9px 1px 3px; background: #fff; }
.dtitle button { margin-left: auto; }
.dbody { padding: 0 6px 6px 5px; }
.src { display: block; height: 24px; line-height: 18px; }
.field { display: flex; align-items: center; height: 21px; margin-left: 25px; padding-right: 2px; background: #fff; }
.field input { width: 73px; padding-left: 6px; }
.ibeam { width: 1px; height: 17px; background: #000; }
.field button { width: 22px; height: 19px; margin-left: auto; background: #e1e1e1; border: 1px solid #adadad; }
.opt { display: flex; align-items: center; height: 26px; margin-left: 24px; gap: 6px; }
.opt.first { margin-top: 4px; margin-bottom: 4px; }
.opt input { appearance: none; width: 13px; height: 13px; background: #fff; border: 1px solid #333; }
.opt input[type="radio"] { border-radius: 50%; }
.opt input[type="radio"]:checked { background: radial-gradient(circle, #222 3px, #fff 4px); }
.opt.sub { height: 27px; margin-left: 48px; gap: 5px; color: #a0a0a0; }
.opt input[type="checkbox"] { border-color: #c8c8c8; background: transparent; display: flex; justify-content: center; }
.opt input[type="checkbox"]::after { content: ""; width: 4px; height: 8px; border: solid #b5b5b5; border-width: 0 1px 1px 0; transform: rotate(40deg); }
.rowsel { position: relative; display: flex; align-items: center; height: 23px; margin: 0 0 3px 48px; gap: 6px; }
.rowsel select { width: 34px; height: 23px; padding-left: 3px; border: 1px solid #adadad; background: #e1e1e1; }
.rowsel::after { content: ""; position: absolute; left: 98px; top: 9px; border: 4px solid transparent; border-top-color: #000; border-bottom: 0; }
.actions { display: flex; justify-content: flex-end; gap: 8px; margin-top: 14px; }
.actions button { width: 77px; height: 30px; background: #e1e1e1; border: 1px solid #adadad; }
.actions .ok { border: 2px solid #0078d7; }
.pointers { position: absolute; left: -1px; top: -1px; }

.ime { position: absolute; right: 16px; top: 722px; display: flex; align-items: center; justify-content: center; gap: 4px; width: 60px; height: 26px; background: #fff; border: 1px solid #8a8a8a; border-radius: 5px; box-shadow: 0 1px 4px #00000088; color: #333; }
.mark { position: absolute; right: 11px; bottom: 7px; display: flex; opacity: .85; }
.mark div { display: flex; flex-direction: column; }
.mark strong { font-size: 21px; line-height: 25px; color: #4f8fd3; }
.mark span { font: 17px/20px "Liberation Sans", sans-serif; color: #4cb96f; }
```
FILE: script.js
```js
const rows = [
  ["学号", "姓名", "语文", "数学", "英语"],
  [1, "李子安", 98, 53, 94],
  [2, "程晓辉", 85, 97, 73],
  [3, "周清新", 96, 94, 94],
  [4, "夏侯", 94, 94, 74],
  [5, "陈诚", 73, 74, 84],
  [6, "赵晓", 84, 84, 84],
  [7, "黄丽", 74, 83, 94],
  [8, "程海", 74, 94, 93],
];
const letters = [..."ABCDEFGHIJKLMNOPQRSTUVWXYZ"];
const rowCount = 44;

const head = letters.map((l, c) => `<th scope="col"${c < 5 ? ' class="hot"' : ""}>${l}</th>`).join("");
let body = "";
for (let r = 0; r < rowCount; r++) {
  const data = rows[r];
  const cells = letters.map((_, c) => {
    if (!data || c >= data.length) return "<td></td>";
    return `<td class="${r + c === 0 ? "hot cur" : "hot"}">${data[c]}</td>`;
  }).join("");
  body += `<tr><th scope="row"${data ? ' class="hot"' : ""}>${r + 1}</th>${cells}</tr>`;
}
document.getElementById("grid").innerHTML =
  `<colgroup><col class="rh"><col span="26"></colgroup><thead><tr><th><div class="corner"></div></th>${head}</tr></thead><tbody>${body}</tbody>`;
```
